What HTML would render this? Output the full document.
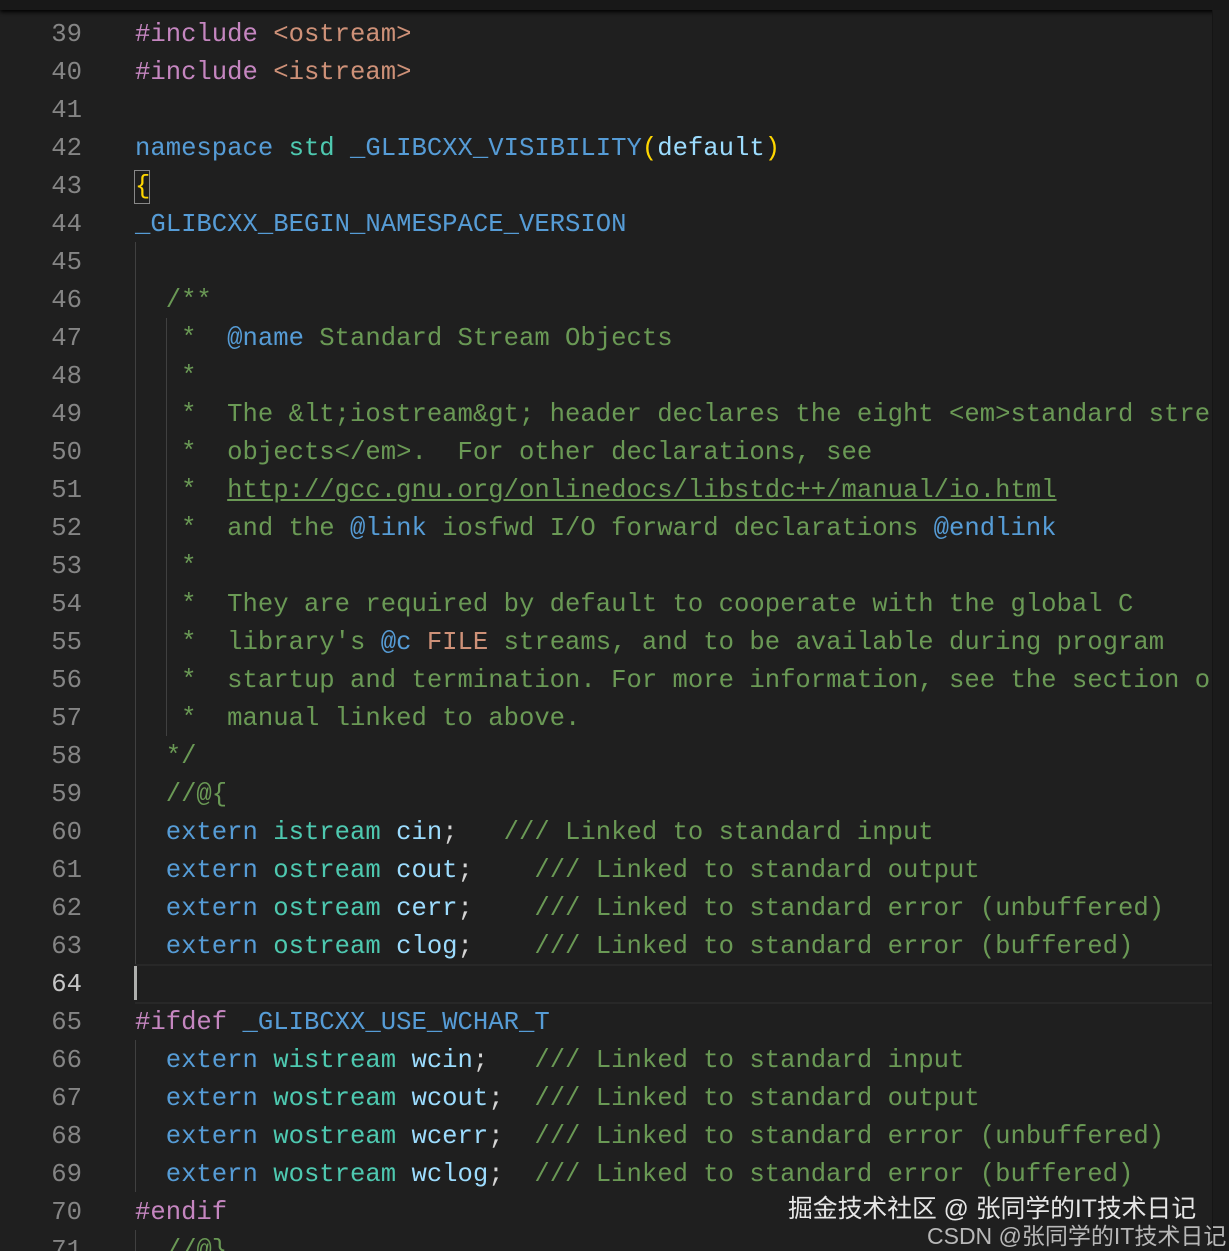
<!DOCTYPE html>
<html><head><meta charset="utf-8"><style>
html,body{margin:0;padding:0;width:1229px;height:1251px;overflow:hidden}
body{background:#1f1f1f;position:relative;font-family:"Liberation Mono","DejaVu Sans Mono",monospace;font-size:25.6px}
.top{position:absolute;left:0;top:0;width:1229px;height:10px;background:#181818;box-shadow:0 2px 4px #000}
.ln{position:absolute;left:0;width:82px;text-align:right;color:#858585;height:38px;line-height:42px}
.c{position:absolute;left:135px;white-space:pre;color:#d4d4d4;height:38px;line-height:42px}
.g{position:absolute;width:1px;background:#404040}
.k{color:#569cd6}.t{color:#4ec9b0}.v{color:#9cdcfe}.m{color:#6a9955}.p{color:#c586c0}.s{color:#ce9178}.y{color:#ffd700}.d{color:#569cd6}
.u{text-decoration:underline}
.mini{position:absolute;left:1212px;top:10px;width:17px;height:1241px;background:#1b1b1b;border-left:1px solid #151515}
.wm{position:absolute;font-family:"Liberation Sans","Noto Sans CJK SC",sans-serif;white-space:nowrap}
</style></head><body>
<div class="top"></div>
<div class="mini"></div>
<div style="position:absolute;left:135px;top:964px;width:1077px;height:36px;border-top:2px solid #282828;border-bottom:2px solid #282828"></div>
<div style="position:absolute;left:134px;top:966px;width:3px;height:34px;background:#aeafad"></div>
<div class="g" style="left:135px;top:242px;height:722px"></div>
<div class="g" style="left:135px;top:1040px;height:152px"></div>
<div class="g" style="left:135px;top:1230px;height:21px"></div>
<div class="g" style="left:166px;top:318px;height:418px"></div>
<div style="position:absolute;left:134px;top:170px;width:14px;height:32px;border:1px solid #888"></div>

<div class="ln" style="top:14px">39</div><div class="c" style="top:14px"><span class="p">#include</span> <span class="s">&lt;ostream&gt;</span></div>
<div class="ln" style="top:52px">40</div><div class="c" style="top:52px"><span class="p">#include</span> <span class="s">&lt;istream&gt;</span></div>
<div class="ln" style="top:90px">41</div>
<div class="ln" style="top:128px">42</div><div class="c" style="top:128px"><span class="k">namespace</span> <span class="t">std</span> <span class="d">_GLIBCXX_VISIBILITY</span><span class="y">(</span><span class="v">default</span><span class="y">)</span></div>
<div class="ln" style="top:166px">43</div><div class="c" style="top:166px"><span class="y">{</span></div>
<div class="ln" style="top:204px">44</div><div class="c" style="top:204px"><span class="d">_GLIBCXX_BEGIN_NAMESPACE_VERSION</span></div>
<div class="ln" style="top:242px">45</div>
<div class="ln" style="top:280px">46</div><div class="c m" style="top:280px">  /**</div>
<div class="ln" style="top:318px">47</div><div class="c m" style="top:318px">   *  <span class="k">@name</span> Standard Stream Objects</div>
<div class="ln" style="top:356px">48</div><div class="c m" style="top:356px">   *</div>
<div class="ln" style="top:394px">49</div><div class="c m" style="top:394px">   *  The &amp;lt;iostream&amp;gt; header declares the eight &lt;em&gt;standard stre</div>
<div class="ln" style="top:432px">50</div><div class="c m" style="top:432px">   *  objects&lt;/em&gt;.  For other declarations, see</div>
<div class="ln" style="top:470px">51</div><div class="c m" style="top:470px">   *  <span class="u">http://gcc.gnu.org/onlinedocs/libstdc++/manual/io.html</span></div>
<div class="ln" style="top:508px">52</div><div class="c m" style="top:508px">   *  and the <span class="k">@link</span> iosfwd I/O forward declarations <span class="k">@endlink</span></div>
<div class="ln" style="top:546px">53</div><div class="c m" style="top:546px">   *</div>
<div class="ln" style="top:584px">54</div><div class="c m" style="top:584px">   *  They are required by default to cooperate with the global C</div>
<div class="ln" style="top:622px">55</div><div class="c m" style="top:622px">   *  library's <span class="k">@c</span> <span class="s">FILE</span> streams, and to be available during program</div>
<div class="ln" style="top:660px">56</div><div class="c m" style="top:660px">   *  startup and termination. For more information, see the section o</div>
<div class="ln" style="top:698px">57</div><div class="c m" style="top:698px">   *  manual linked to above.</div>
<div class="ln" style="top:736px">58</div><div class="c m" style="top:736px">  */</div>
<div class="ln" style="top:774px">59</div><div class="c m" style="top:774px">  //@{</div>
<div class="ln" style="top:812px">60</div><div class="c" style="top:812px">  <span class="k">extern</span> <span class="t">istream</span> <span class="v">cin</span>;   <span class="m">/// Linked to standard input</span></div>
<div class="ln" style="top:850px">61</div><div class="c" style="top:850px">  <span class="k">extern</span> <span class="t">ostream</span> <span class="v">cout</span>;    <span class="m">/// Linked to standard output</span></div>
<div class="ln" style="top:888px">62</div><div class="c" style="top:888px">  <span class="k">extern</span> <span class="t">ostream</span> <span class="v">cerr</span>;    <span class="m">/// Linked to standard error (unbuffered)</span></div>
<div class="ln" style="top:926px">63</div><div class="c" style="top:926px">  <span class="k">extern</span> <span class="t">ostream</span> <span class="v">clog</span>;    <span class="m">/// Linked to standard error (buffered)</span></div>
<div class="ln" style="top:964px;color:#c6c6c6">64</div>
<div class="ln" style="top:1002px">65</div><div class="c" style="top:1002px"><span class="p">#ifdef</span> <span class="d">_GLIBCXX_USE_WCHAR_T</span></div>
<div class="ln" style="top:1040px">66</div><div class="c" style="top:1040px">  <span class="k">extern</span> <span class="t">wistream</span> <span class="v">wcin</span>;   <span class="m">/// Linked to standard input</span></div>
<div class="ln" style="top:1078px">67</div><div class="c" style="top:1078px">  <span class="k">extern</span> <span class="t">wostream</span> <span class="v">wcout</span>;  <span class="m">/// Linked to standard output</span></div>
<div class="ln" style="top:1116px">68</div><div class="c" style="top:1116px">  <span class="k">extern</span> <span class="t">wostream</span> <span class="v">wcerr</span>;  <span class="m">/// Linked to standard error (unbuffered)</span></div>
<div class="ln" style="top:1154px">69</div><div class="c" style="top:1154px">  <span class="k">extern</span> <span class="t">wostream</span> <span class="v">wclog</span>;  <span class="m">/// Linked to standard error (buffered)</span></div>
<div class="ln" style="top:1192px">70</div><div class="c" style="top:1192px"><span class="p">#endif</span></div>
<div class="ln" style="top:1230px">71</div><div class="c m" style="top:1230px">  //@}</div>

<div class="wm" style="left:788px;top:1189px;font-size:24.8px;color:#e6e6e6">掘金技术社区 @ 张同学的IT技术日记</div>
<div class="wm" style="left:927px;top:1217px;font-size:23px;color:#b8b8b8">CSDN @张同学的IT技术日记</div>
</body></html>
